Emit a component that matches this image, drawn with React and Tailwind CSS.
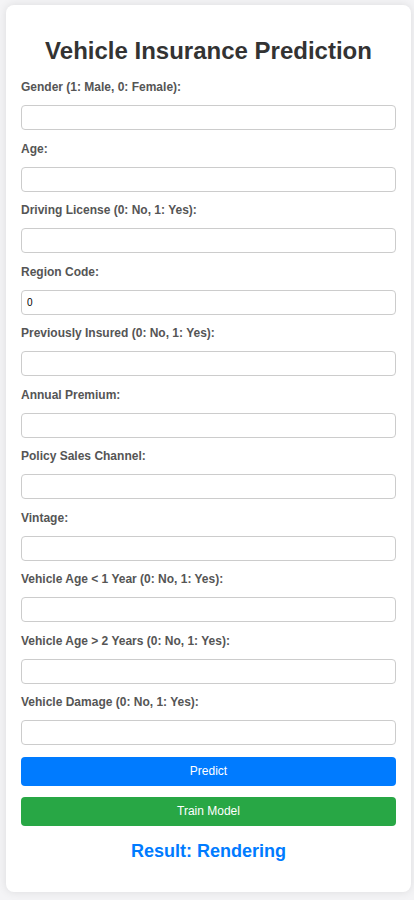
import React from "react";

const fields = [
  { label: "Gender (1: Male, 0: Female):" },
  { label: "Age:" },
  { label: "Driving License (0: No, 1: Yes):" },
  { label: "Region Code:", value: "0" },
  { label: "Previously Insured (0: No, 1: Yes):" },
  { label: "Annual Premium:" },
  { label: "Policy Sales Channel:" },
  { label: "Vintage:" },
  { label: "Vehicle Age < 1 Year (0: No, 1: Yes):" },
  { label: "Vehicle Age > 2 Years (0: No, 1: Yes):" },
  { label: "Vehicle Damage (0: No, 1: Yes):" },
];

export default function App() {
  return (
    <div
      className="min-h-[900px] bg-[#f4f4f6] pt-[5px] px-[6px] pb-[9px]"
      style={{ fontFamily: '"Liberation Sans", Arial, sans-serif' }}
    >
      <div className="bg-white rounded-[8px] shadow-[0_0_10px_rgba(0,0,0,0.1)] px-[15px] pt-[32px] pb-[30px] w-[405px]">
        <h2 className="text-center text-[24px] leading-[28px] font-bold text-[#333] mb-[15px]">
          Vehicle Insurance Prediction
        </h2>
        <form onSubmit={(e) => e.preventDefault()}>
          {fields.map((f, i) => (
            <div key={i} className="mb-[11.5px]">
              <label className="block text-[12px] leading-[15px] font-bold text-[#555] mb-[10px]">
                {f.label}
              </label>
              <input
                type="text"
                defaultValue={f.value || ""}
                className="block w-full h-[25px] border border-[#ccc] rounded-[4px] px-[5px] text-[10px] text-black outline-none"
              />
            </div>
          ))}
          <button
            type="button"
            className="block w-full h-[29px] mt-[0.5px] bg-[#007bff] text-white text-[12px] rounded-[4px]"
          >
            Predict
          </button>
          <button
            type="button"
            className="block w-full h-[29px] mt-[11px] bg-[#28a745] text-white text-[12px] rounded-[4px]"
          >
            Train Model
          </button>
        </form>
        <div className="text-center text-[18px] leading-[22px] font-bold text-[#007bff] mt-[14px]">
          Result: Rendering
        </div>
      </div>
    </div>
  );
}
